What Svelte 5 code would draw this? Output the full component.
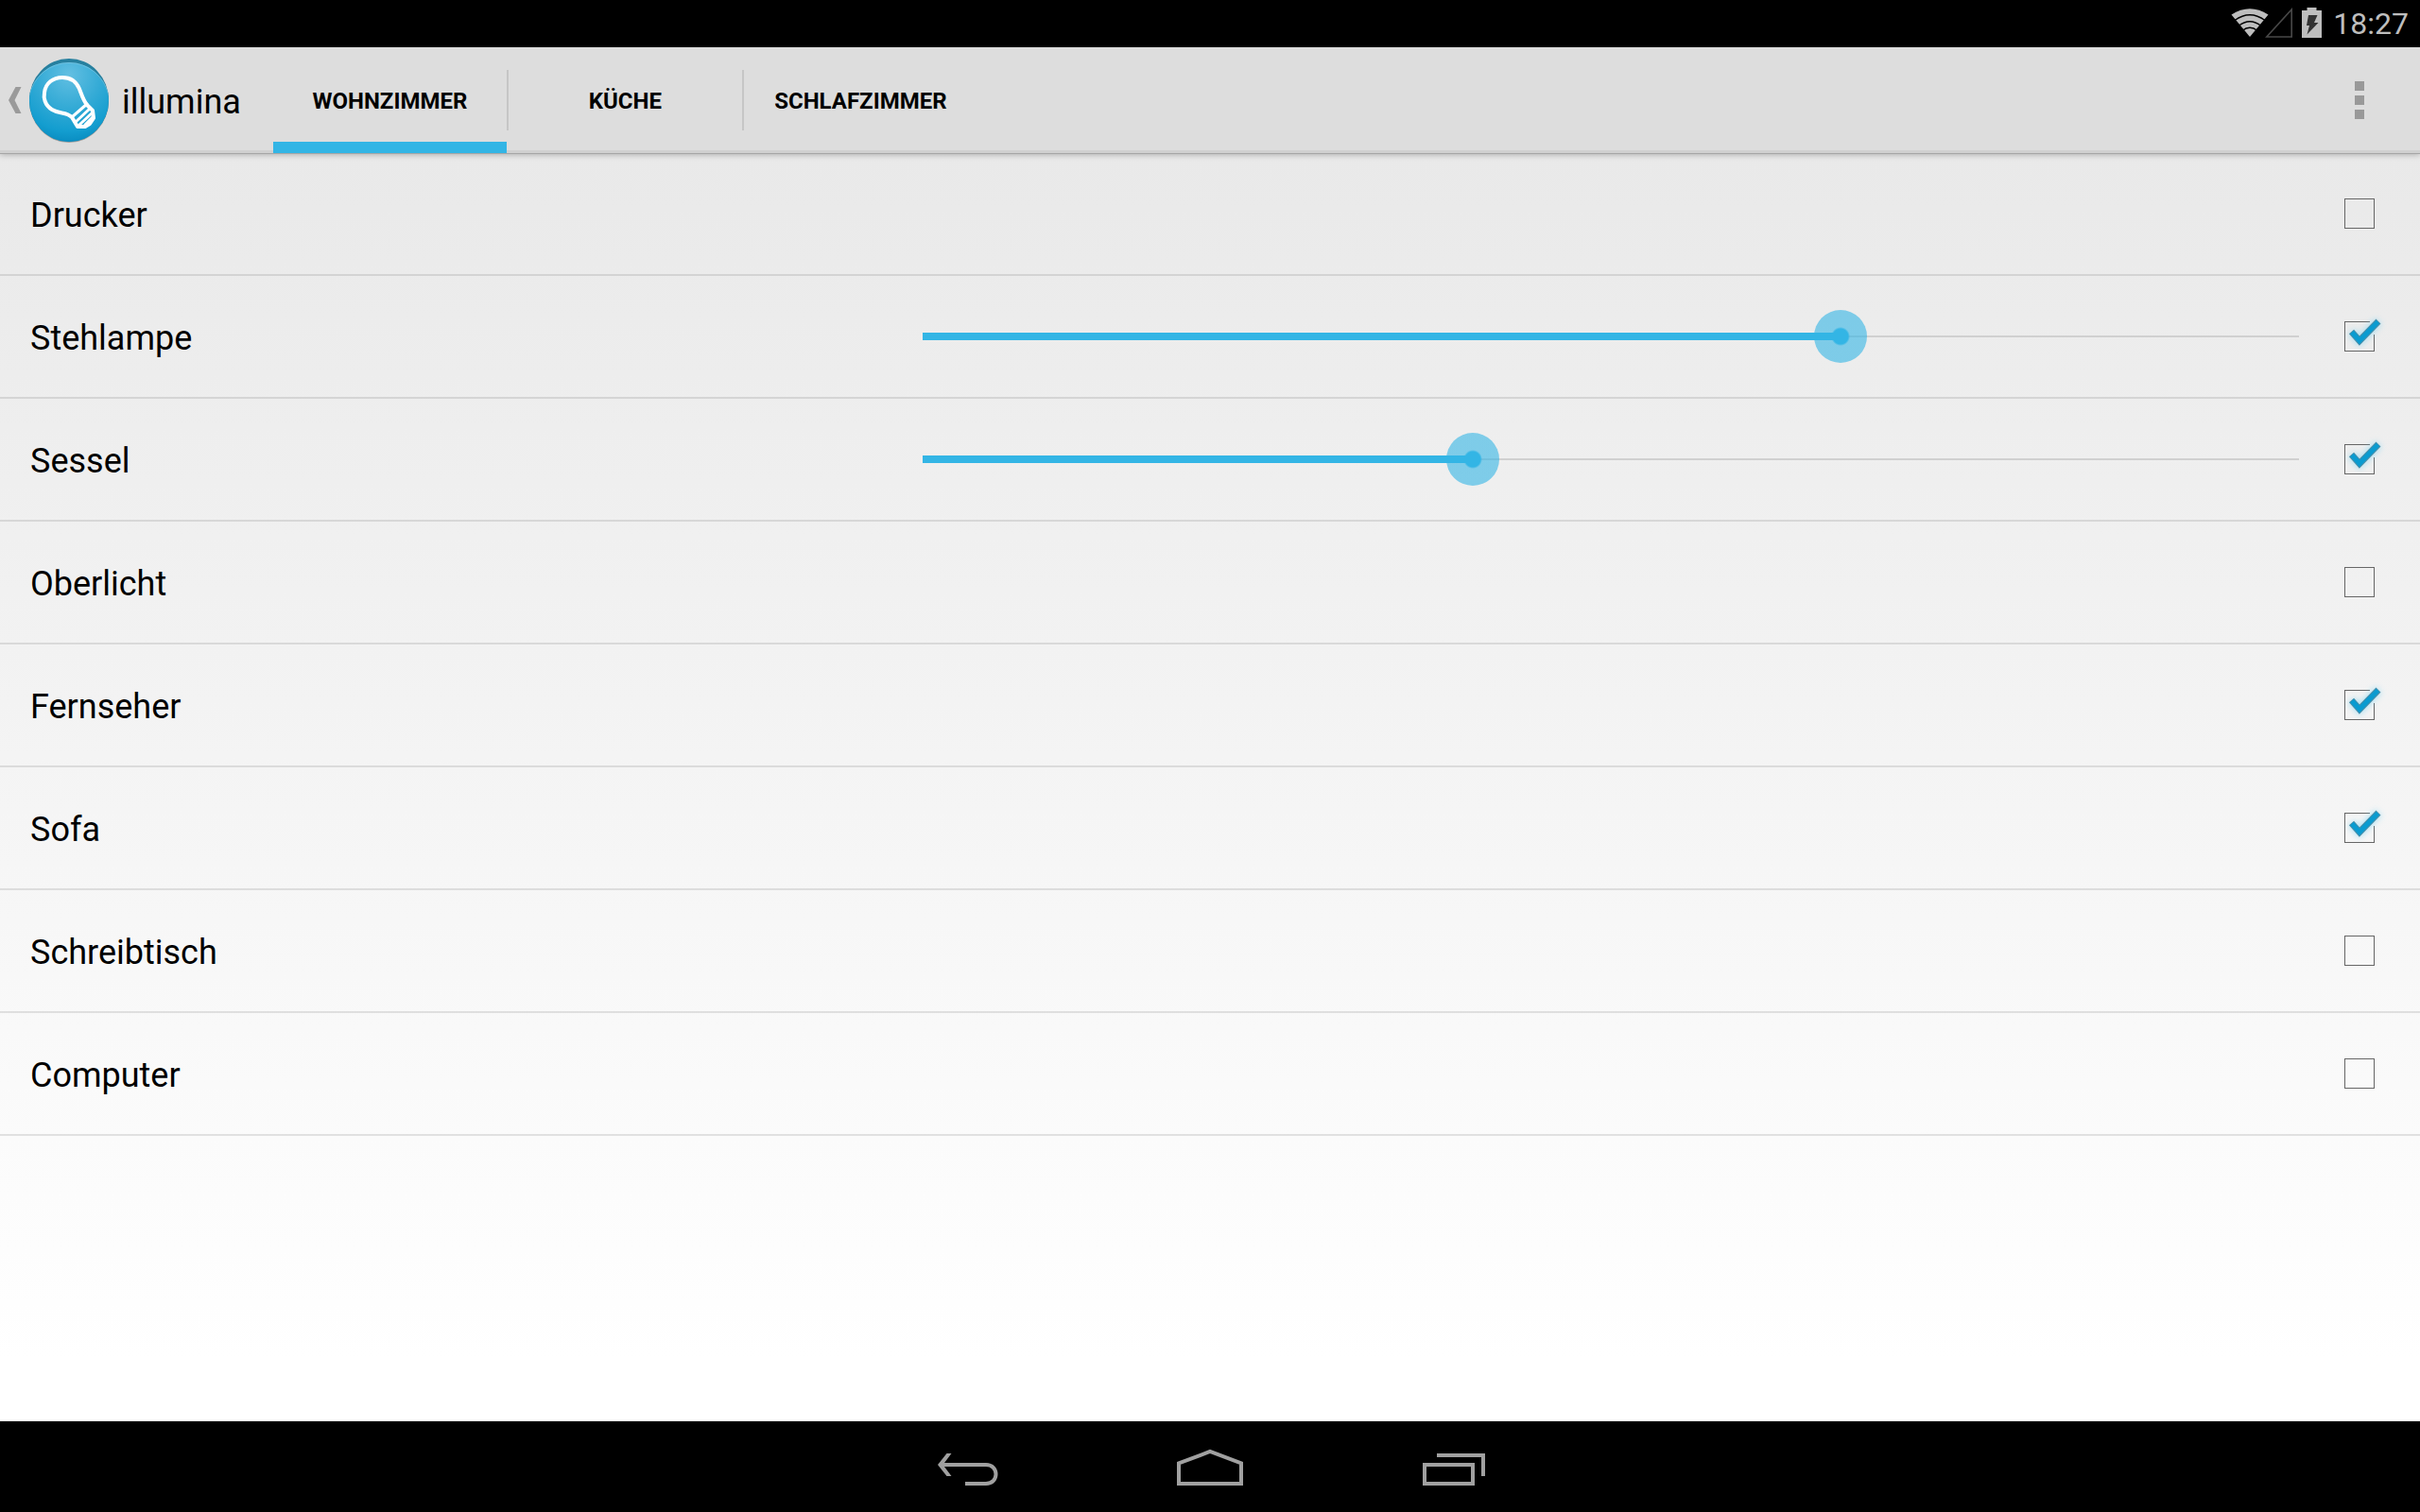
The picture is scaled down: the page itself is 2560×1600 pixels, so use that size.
<script>
  const tabs = ['Wohnzimmer', 'Küche', 'Schlafzimmer'];
  let active = $state(0);
  let devices = $state([
    { id: 'drucker', name: 'Drucker', on: false },
    { id: 'stehlampe', name: 'Stehlampe', on: true, level: 170 },
    { id: 'sessel', name: 'Sessel', on: true, level: 102 },
    { id: 'oberlicht', name: 'Oberlicht', on: false },
    { id: 'fernseher', name: 'Fernseher', on: true },
    { id: 'sofa', name: 'Sofa', on: true },
    { id: 'schreibtisch', name: 'Schreibtisch', on: false },
    { id: 'computer', name: 'Computer', on: false }
  ]);
</script>

<div class="screen">
  <div class="status">
    <svg width="40" height="30" viewBox="0 0 40 30" aria-hidden="true">
      <path d="M20 30 L0.5 6.5 Q20 -6 39.5 6.5 Z" fill="#bebebe" />
      <g fill="none" stroke="#000" stroke-width="1.5">
        <path d="M4 12.5 Q20 1 36 12.500" />
        <path d="M8 18.500 Q20 9 32 18.500" />
        <path d="M12 23.500 Q20 17 28 23.500" />
      </g>
    </svg>
    <svg class="signal" width="30" height="32" viewBox="0 0 30 32" aria-hidden="true">
      <path d="M28.200 2 V31 H1.800 Z" fill="none" stroke="#484848" stroke-width="1.6" />
    </svg>
    <svg class="battery" width="21" height="32" viewBox="0 0 21 32" aria-hidden="true">
      <path d="M5.500 0 H15.500 V3 H21 V32 H0 V3 H5.500 Z" fill="#bebebe" />
      <path d="M7 8 H16.500 L13 16 H17.500 L5.500 28.500 L8 19 H5 Z" fill="#333" />
    </svg>
    <time>18:27</time>
  </div>

  <header>
    <button class="home" aria-label="Nach oben">
      <svg width="14" height="28" viewBox="0 0 14 28" aria-hidden="true">
        <path d="M7.500 0 H13.500 L6.500 14 L13.500 28 H7.500 L0 14 Z" fill="#9a9a9a" />
      </svg>
      <svg class="logo" width="86" height="92" viewBox="0 -1 86 92" aria-hidden="true">
        <defs>
          <radialGradient id="ball" cx="0.5" cy="0.15" r="0.85">
            <stop offset="0" stop-color="#62bfe2" />
            <stop offset="0.450" stop-color="#35abd6" />
            <stop offset="0.800" stop-color="#139dcf" />
            <stop offset="1" stop-color="#0788bd" />
          </radialGradient>
          <clipPath id="disc"><ellipse cx="43" cy="45" rx="42" ry="44" /></clipPath>
        </defs>
        <ellipse cx="43" cy="46" rx="42" ry="44" fill="#777" opacity="0.6" />
        <ellipse cx="43" cy="45" rx="42" ry="44" fill="#27809f" />
        <g clip-path="url(#disc)">
          <ellipse cx="43" cy="49" rx="43" ry="44" fill="url(#ball)" />
          <path d="M1 40 A43 44 0 0 1 85 40" fill="none" stroke="#8fd0e8" stroke-width="1" opacity="0.5" />
        </g>
        <g fill="none" stroke="#fff" stroke-linejoin="round" stroke-linecap="round">
          <path
            stroke-width="4"
            d="M46 63 C40 57 33 60 25 55 C17 50 16 42 17 37 C18 27 26 21 36 21 C45 21 51 26 54 33 C57 41 58 45 62 50 L68 56 L69 64 L65 70 L60 73 H52 Z"
          />
          <path stroke-width="3" d="M46 63 L62 49 M50 68 L65 54 M54 71 L68 58 M60 71 L68 63" />
        </g>
      </svg>
      <span class="title">illumina</span>
    </button>
    <nav>
      {#each tabs as tab, i}
        <button class="tab" class:active={active === i} onclick={() => (active = i)}>{tab}</button>
      {/each}
    </nav>
    <button class="menu" aria-label="Weitere Optionen"><i></i><i></i><i></i></button>
  </header>

  <main>
    <ul>
      {#each devices as d (d.id)}
        <li>
          <label class="name" for={d.id}>{d.name}</label>
          {#if d.level !== undefined}
            <input
              class="slider"
              type="range"
              min="0"
              max="255"
              bind:value={d.level}
              aria-label="Helligkeit {d.name}"
              style:--level={d.level / 255}
            />
          {/if}
          <span class="check">
            <input type="checkbox" id={d.id} bind:checked={d.on} />
            {#if d.on}
              <svg class="tick" width="48" height="48" viewBox="0 0 48 48" aria-hidden="true">
                <path class="halo" d="M15.500 19 L24 28.500 L44 8" />
                <path class="edge" d="M15.500 19 L24 28.500 L44 8" />
                <path class="mark" d="M16 19.500 L24 28.500 L43.500 8.500" />
              </svg>
            {/if}
          </span>
        </li>
      {/each}
    </ul>
  </main>

  <footer>
    <button aria-label="Zurück">
      <svg width="72" height="48" viewBox="0 0 72 48">
        <path d="M8 22 H55 C69 22 69 42 55 42 H33" />
        <path class="solid" d="M13.500 10 H18.500 L9.500 22 L18.500 34 H13.500 L4 22 Z" />
      </svg>
    </button>
    <button aria-label="Startseite">
      <svg width="72" height="48" viewBox="0 0 72 48"><path d="M3 42 V20.500 L36 8 L69 20.500 V42 Z" /></svg>
    </button>
    <button aria-label="Letzte Apps">
      <svg width="72" height="48" viewBox="0 0 72 48"><path d="M7 22 H58 V42 H7 Z M20 12 H69 V34" /></svg>
    </button>
  </footer>
</div>

<style>
  :global(body) {
    margin: 0;
    background: #000;
  }
  .screen {
    min-height: 100vh;
    display: flex;
    flex-direction: column;
    font-family: Roboto, 'Liberation Sans', sans-serif;
    color: #000;
  }
  button {
    border: 0;
    padding: 0;
    background: none;
    font: inherit;
    color: inherit;
    cursor: pointer;
  }
  svg {
    display: block;
    flex: none;
  }
  .status {
    height: 50px;
    box-sizing: border-box;
    padding: 0 12px 2px 0;
    background: #000;
    color: #bebebe;
    display: flex;
    align-items: center;
    justify-content: flex-end;
  }
  .signal {
    margin-left: -4px;
  }
  .battery {
    margin: 0 12px 0 9px;
  }
  time {
    font-size: 32px;
    line-height: 48px;
    padding-top: 2px;
  }
  header {
    height: 112px;
    display: flex;
    align-items: stretch;
    background: linear-gradient(#ddd 109px, #d0d0d0 109px);
    box-shadow: 0 1px 0 #a6a6a6, 0 2px 6px rgba(0, 0, 0, 0.25);
    position: relative;
  }
  .home {
    display: flex;
    align-items: center;
    padding: 0 34px 0 9px;
  }
  .logo {
    margin: 0 13px 0 7px;
  }
  .title {
    font-size: 36px;
    line-height: 44px;
    padding-top: 4px;
  }
  nav {
    display: flex;
  }
  .tab {
    position: relative;
    min-width: 247px;
    padding: 2px 32px 0;
    font-size: 24px;
    line-height: 32px;
    font-weight: 700;
    text-transform: uppercase;
  }
  .tab + .tab {
    margin-left: 2px;
  }
  .tab + .tab::before {
    content: '';
    position: absolute;
    left: -2px;
    top: 24px;
    bottom: 24px;
    width: 2px;
    background: #c6c6c6;
  }
  .tab.active {
    background: linear-gradient(#33b5e5, #33b5e5) bottom / 100% 12px no-repeat;
  }
  .menu {
    margin-left: auto;
    width: 128px;
    display: flex;
    flex-direction: column;
    align-items: center;
    justify-content: center;
    gap: 5px;
  }
  .menu i {
    width: 10px;
    height: 10px;
    background: #999;
  }
  main {
    flex: 1;
    background: linear-gradient(#e9e9e9, #fff 95%);
  }
  ul {
    list-style: none;
    margin: 0;
    padding: 0;
  }
  li {
    display: grid;
    grid-template-columns: 59fr 91fr 128px;
    align-items: center;
    height: 128px;
    padding-left: 32px;
    border-bottom: 2px solid rgba(0, 0, 0, 0.1);
  }
  .name {
    font-size: 36px;
    line-height: 44px;
    padding-top: 4px;
  }
  .slider {
    appearance: none;
    height: 64px;
    margin: 0 -28px;
    background:
      linear-gradient(#33b5e5, #33b5e5) 28px 50% / calc((100% - 56px) * var(--level)) 8px no-repeat,
      linear-gradient(#d0d0d0, #d0d0d0) 28px 50% / calc(100% - 56px) 2px no-repeat;
  }
  .slider::-webkit-slider-thumb {
    appearance: none;
    width: 56px;
    height: 56px;
    border-radius: 50%;
    background: radial-gradient(circle, #33b5e5 8px, rgba(51, 181, 229, 0.6) 10px);
  }
  .check {
    grid-column: 3;
    position: relative;
    width: 32px;
    height: 32px;
    margin-left: 48px;
  }
  .check input {
    appearance: none;
    display: block;
    box-sizing: border-box;
    width: 32px;
    height: 32px;
    margin: 0;
    border: 1px solid #666;
  }
  .check input:checked {
    clip-path: polygon(0 0, 27px 0, 27px 14px, 100% 14px, 100% 100%, 0 100%);
  }
  .tick {
    position: absolute;
    left: -8px;
    top: -8px;
    pointer-events: none;
    overflow: visible;
  }
  .tick path {
    fill: none;
  }
  .tick .halo {
    stroke: #7fd4f2;
    stroke-width: 9;
    opacity: 0.6;
    filter: blur(3px);
  }
  .tick .edge {
    stroke: #4a8ea8;
    stroke-width: 7;
  }
  .tick .mark {
    stroke: #0a9bd0;
    stroke-width: 5;
  }
  footer {
    height: 96px;
    background: #000;
    display: flex;
    justify-content: center;
    align-items: center;
    gap: 56px;
  }
  footer button {
    width: 200px;
    display: flex;
    justify-content: center;
  }
  footer path {
    fill: none;
    stroke: #a0a0a0;
    stroke-width: 4;
  }
  footer .solid {
    fill: #a0a0a0;
    stroke: none;
  }
</style>
